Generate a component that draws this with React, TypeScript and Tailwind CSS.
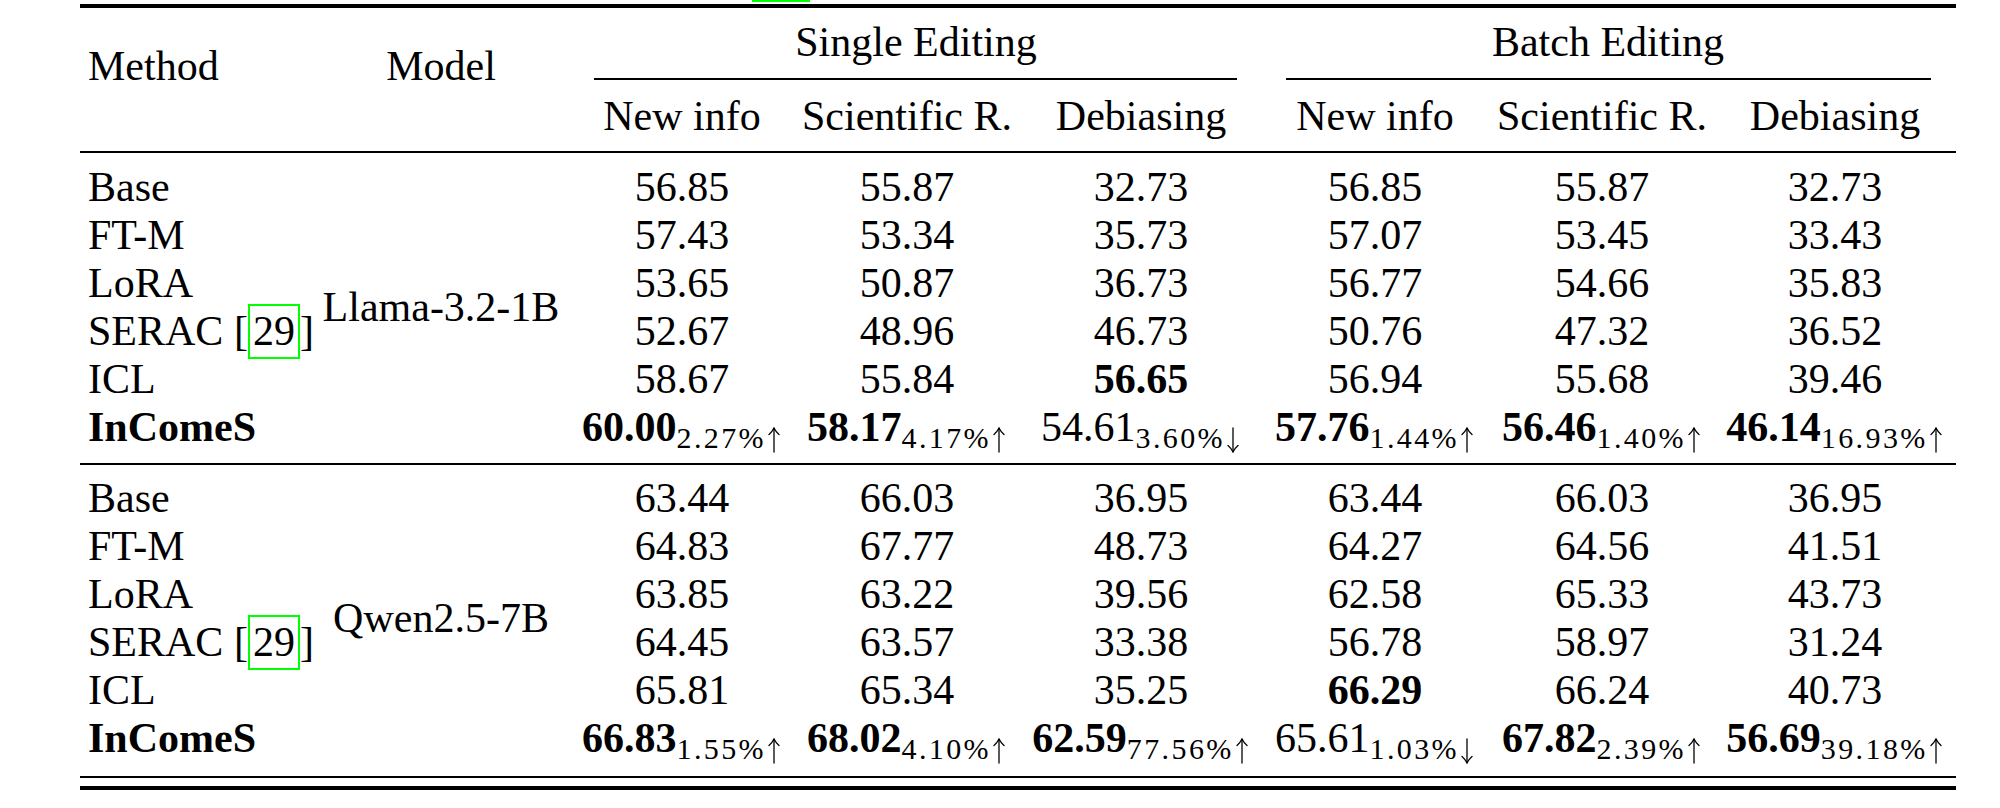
import React from "react";

type Cell = { v: string; b?: boolean; sub?: string; down?: boolean };

const groups: { model: string; rows: { name: string; cite?: boolean; bold?: boolean; cells: Cell[] }[] }[] = [
  {
    model: "Llama-3.2-1B",
    rows: [
      { name: "Base", cells: [{ v: "56.85" }, { v: "55.87" }, { v: "32.73" }, { v: "56.85" }, { v: "55.87" }, { v: "32.73" }] },
      { name: "FT-M", cells: [{ v: "57.43" }, { v: "53.34" }, { v: "35.73" }, { v: "57.07" }, { v: "53.45" }, { v: "33.43" }] },
      { name: "LoRA", cells: [{ v: "53.65" }, { v: "50.87" }, { v: "36.73" }, { v: "56.77" }, { v: "54.66" }, { v: "35.83" }] },
      { name: "SERAC", cite: true, cells: [{ v: "52.67" }, { v: "48.96" }, { v: "46.73" }, { v: "50.76" }, { v: "47.32" }, { v: "36.52" }] },
      { name: "ICL", cells: [{ v: "58.67" }, { v: "55.84" }, { v: "56.65", b: true }, { v: "56.94" }, { v: "55.68" }, { v: "39.46" }] },
      {
        name: "InComeS",
        bold: true,
        cells: [
          { v: "60.00", b: true, sub: "2.27%" },
          { v: "58.17", b: true, sub: "4.17%" },
          { v: "54.61", sub: "3.60%", down: true },
          { v: "57.76", b: true, sub: "1.44%" },
          { v: "56.46", b: true, sub: "1.40%" },
          { v: "46.14", b: true, sub: "16.93%" },
        ],
      },
    ],
  },
  {
    model: "Qwen2.5-7B",
    rows: [
      { name: "Base", cells: [{ v: "63.44" }, { v: "66.03" }, { v: "36.95" }, { v: "63.44" }, { v: "66.03" }, { v: "36.95" }] },
      { name: "FT-M", cells: [{ v: "64.83" }, { v: "67.77" }, { v: "48.73" }, { v: "64.27" }, { v: "64.56" }, { v: "41.51" }] },
      { name: "LoRA", cells: [{ v: "63.85" }, { v: "63.22" }, { v: "39.56" }, { v: "62.58" }, { v: "65.33" }, { v: "43.73" }] },
      { name: "SERAC", cite: true, cells: [{ v: "64.45" }, { v: "63.57" }, { v: "33.38" }, { v: "56.78" }, { v: "58.97" }, { v: "31.24" }] },
      { name: "ICL", cells: [{ v: "65.81" }, { v: "65.34" }, { v: "35.25" }, { v: "66.29", b: true }, { v: "66.24" }, { v: "40.73" }] },
      {
        name: "InComeS",
        bold: true,
        cells: [
          { v: "66.83", b: true, sub: "1.55%" },
          { v: "68.02", b: true, sub: "4.10%" },
          { v: "62.59", b: true, sub: "77.56%" },
          { v: "65.61", sub: "1.03%", down: true },
          { v: "67.82", b: true, sub: "2.39%" },
          { v: "56.69", b: true, sub: "39.18%" },
        ],
      },
    ],
  },
];

const gridCols = "grid grid-cols-[220px_282px_200px_250px_218px_250px_204px_262px] auto-rows-[48px]";

function Arrow({ down }: { down?: boolean }) {
  return (
    <svg
      width="16"
      height="26"
      viewBox="0 0 16 26"
      className="inline-block align-[-5px]"
      fill="none"
      stroke="#000"
      strokeWidth="1.3"
      strokeLinecap="round"
    >
      {down ? (
        <>
          <path d="M8 1 V24.5" />
          <path d="M3 18.5 Q6 21 8 25 Q10 21 13 18.5" />
        </>
      ) : (
        <>
          <path d="M8 25 V1.5" />
          <path d="M3 7.5 Q6 5 8 1 Q10 5 13 7.5" />
        </>
      )}
    </svg>
  );
}

function ValueCell({ c }: { c: Cell }) {
  return (
    <div className="flex justify-center whitespace-nowrap">
      <span>
        <span className={c.b ? "font-bold" : ""}>{c.v}</span>
        {c.sub && (
          <span className="text-[30px] leading-none align-[-7px]">
            <span className="tracking-[0.08em]">{c.sub}</span>
            <Arrow down={c.down} />
          </span>
        )}
      </span>
    </div>
  );
}

function Group({ g }: { g: (typeof groups)[number] }) {
  return (
    <div className={gridCols}>
      {g.rows.map((r, i) => (
        <React.Fragment key={r.name}>
          <div className={"pl-[8px] whitespace-nowrap " + (r.bold ? "font-bold" : "")} style={{ gridColumn: 1, gridRow: i + 1 }}>
            {r.name}
            {r.cite && (
              <>
                {" ["}
                <span className="inline-block border-2 border-[#00ff00] px-[3px] leading-[51px] my-[-4px]">29</span>
                {"]"}
              </>
            )}
          </div>
          {r.cells.map((c, j) => (
            <div key={j} style={{ gridColumn: j + 3, gridRow: i + 1 }}>
              <ValueCell c={c} />
            </div>
          ))}
        </React.Fragment>
      ))}
      <div className="row-start-1 row-span-6 col-start-2 flex items-center justify-center whitespace-nowrap">
        {g.model}
      </div>
    </div>
  );
}

export default function App() {
  const subs = ["New info", "Scientific R.", "Debiasing"];
  return (
    <div className="w-[2000px] h-[808px] bg-white overflow-hidden text-black font-['Liberation_Serif',serif] text-[42px] leading-[48px]">
      <div className="ml-[80px] w-[1876px]">
        <div className="h-[2px] flex">
          <div className="ml-[672px] w-[58px] bg-[#00ff00]" />
        </div>
        <div className="mt-[2px] h-[4px] bg-black" />
        <div className="flex h-[143px]">
          <div className="w-[220px] shrink-0 pl-[8px] pt-[34px]">Method</div>
          <div className="w-[282px] shrink-0 pt-[34px] text-center">Model</div>
          <div className="w-[668px] shrink-0 flex flex-col">
            <div className="pt-[10px] text-center whitespace-nowrap">Single Editing</div>
            <div className="mt-[12px] ml-[12px] w-[643px] h-[1.5px] bg-black" />
            <div className="mt-[12px] grid grid-cols-[200px_250px_218px]">
              {subs.map((s) => (
                <div key={s} className="flex justify-center whitespace-nowrap">{s}</div>
              ))}
            </div>
          </div>
          <div className="w-[716px] shrink-0 flex flex-col">
            <div className="pt-[10px] text-center whitespace-nowrap">Batch Editing</div>
            <div className="mt-[12px] ml-[36px] w-[645px] h-[1.5px] bg-black" />
            <div className="mt-[12px] grid grid-cols-[250px_204px_262px]">
              {subs.map((s) => (
                <div key={s} className="flex justify-center whitespace-nowrap">{s}</div>
              ))}
            </div>
          </div>
        </div>
        <div className="h-[2px] bg-black" />
        <div className="pt-[10px] pb-[12px]">
          <Group g={groups[0]} />
        </div>
        <div className="h-[2px] bg-black" />
        <div className="pt-[9px] pb-[14px]">
          <Group g={groups[1]} />
        </div>
        <div className="h-[2px] bg-black" />
        <div className="mt-[8px] h-[4px] bg-black" />
      </div>
    </div>
  );
}
